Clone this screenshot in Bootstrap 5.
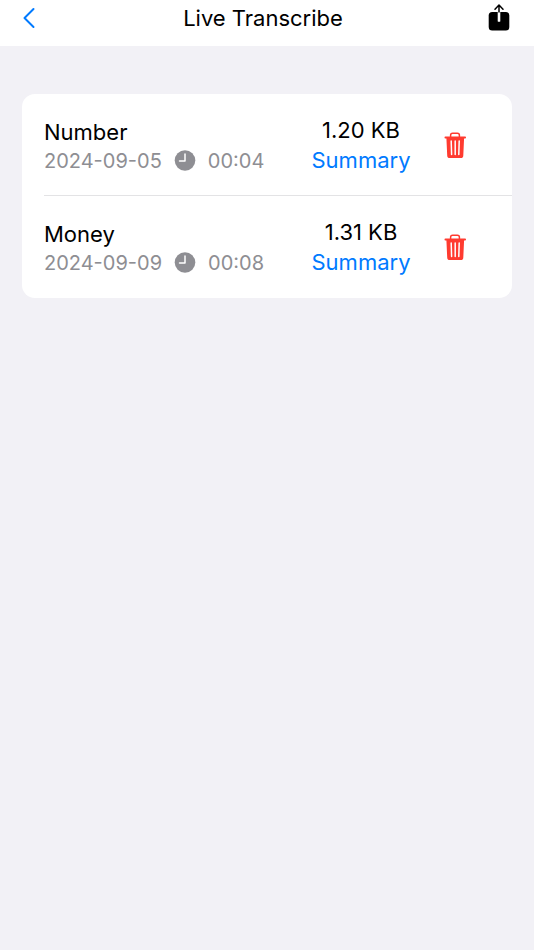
<!DOCTYPE html>
<html lang="en">
<head>
<meta charset="utf-8">
<meta name="viewport" content="width=device-width, initial-scale=1">
<title>Live Transcribe</title>
<link href="https://cdn.jsdelivr.net/npm/bootstrap@5.3.0/dist/css/bootstrap.min.css" rel="stylesheet">
<style>
body { font-family: Inter, "Liberation Sans", sans-serif; background: #f2f1f6; color: #000; font-size: 22px; line-height: 30px; }
.top-bar { height: 46px; padding: 0 22px 10px; }
.top-bar h1 { font-size: 22px; line-height: 30px; }
.page { padding: 48px 22px; }
.files { border-radius: 13px; overflow: hidden; }
.file { padding-left: 22px; background: #fff; }
.file-body { height: 102px; padding: 2px 44px 0 0; }
.file:not(:last-child) .file-body { border-bottom: 1px solid #e3e3e5; }
.file-info { width: 234px; }
.file-meta { color: #8e8e93; font-size: 20px; line-height: 28px; gap: 12px; }
.file-size { width: 166px; padding-bottom: 2px; }
.btn.plain-btn { color: #007aff; font-size: 22px; line-height: 30px; }
svg { display: block; }
</style>
</head>
<body>
<header class="top-bar d-flex align-items-center justify-content-between bg-white">
  <button type="button" class="btn p-0 border-0" aria-label="Back">
    <svg width="18" height="22" viewBox="0 0 18 22" fill="none" stroke="#007aff" stroke-width="2" stroke-linecap="round" stroke-linejoin="round"><path d="M11.500 2 2.500 11l9 9"/></svg>
  </button>
  <h1 class="m-0 fw-normal text-nowrap">Live Transcribe</h1>
  <button type="button" class="btn p-0 border-0" aria-label="Share">
    <svg width="26" height="28" viewBox="0 0 26 28"><rect x="2.700" y="8" width="20.600" height="18.500" rx="3.500"/><path d="M13 8V17.500" stroke="#fff" stroke-width="2.600"/><path d="M13 13V1.500M9 5.300l4-4.300 4 4.300" fill="none" stroke="#000" stroke-width="1.500" stroke-linecap="round" stroke-linejoin="round"/><path d="M13 8.500V17.500" stroke="#fff" stroke-width="2"/></svg>
  </button>
</header>
<main class="page">
  <ul class="files list-unstyled m-0">
    <li class="file">
      <div class="file-body d-flex align-items-center">
        <div class="file-info">
          <div>Number</div>
          <div class="file-meta d-flex align-items-center">
            <span>2024-09-05</span>
            <svg width="22" height="22" viewBox="0 0 22 22"><circle cx="11" cy="10.500" r="10.300" fill="#8e8e93"/><path d="M11 4V11H5.500" fill="none" stroke="#fff" stroke-width="1.500" stroke-linecap="round" stroke-linejoin="round"/></svg>
            <span>00:04</span>
          </div>
        </div>
        <div class="file-size d-flex flex-column align-items-center">
          <span>1.20 KB</span>
          <button type="button" class="plain-btn btn p-0 border-0">Summary</button>
        </div>
        <button type="button" class="btn p-0 border-0" aria-label="Delete Number">
          <svg width="22" height="28" viewBox="0 0 22 28" fill="#ff3b30"><path d="M6.600 5V3.200Q6.600 1.200 8.600 1.200h4.800Q15.400 1.200 15.400 3.200V5" fill="none" stroke="#ff3b30" stroke-width="1.500"/><rect x=".5" y="4.500" width="21.500" height="1.900" rx=".9"/><path d="M2.400 6h17.700L19.300 23.500q-.1 2.600-2.600 2.600H5.800Q3.300 26.100 3.200 23.500z"/><path d="M7.200 9 7.600 22.500M11.200 9v13.500M15.200 9l-.4 13.500" stroke="#fff" stroke-width="1.500" stroke-linecap="round"/></svg>
        </button>
      </div>
    </li>
    <li class="file">
      <div class="file-body d-flex align-items-center">
        <div class="file-info">
          <div>Money</div>
          <div class="file-meta d-flex align-items-center">
            <span>2024-09-09</span>
            <svg width="22" height="22" viewBox="0 0 22 22"><circle cx="11" cy="10.500" r="10.300" fill="#8e8e93"/><path d="M11 4V11H5.500" fill="none" stroke="#fff" stroke-width="1.500" stroke-linecap="round" stroke-linejoin="round"/></svg>
            <span>00:08</span>
          </div>
        </div>
        <div class="file-size d-flex flex-column align-items-center">
          <span>1.31 KB</span>
          <button type="button" class="plain-btn btn p-0 border-0">Summary</button>
        </div>
        <button type="button" class="btn p-0 border-0" aria-label="Delete Money">
          <svg width="22" height="28" viewBox="0 0 22 28" fill="#ff3b30"><path d="M6.600 5V3.200Q6.600 1.200 8.600 1.200h4.800Q15.400 1.200 15.400 3.200V5" fill="none" stroke="#ff3b30" stroke-width="1.500"/><rect x=".5" y="4.500" width="21.500" height="1.900" rx=".9"/><path d="M2.400 6h17.700L19.300 23.500q-.1 2.600-2.600 2.600H5.800Q3.300 26.100 3.200 23.500z"/><path d="M7.200 9 7.600 22.500M11.200 9v13.500M15.200 9l-.4 13.500" stroke="#fff" stroke-width="1.500" stroke-linecap="round"/></svg>
        </button>
      </div>
    </li>
  </ul>
</main>
<script src="https://cdn.jsdelivr.net/npm/bootstrap@5.3.0/dist/js/bootstrap.bundle.min.js"></script>
</body>
</html>
